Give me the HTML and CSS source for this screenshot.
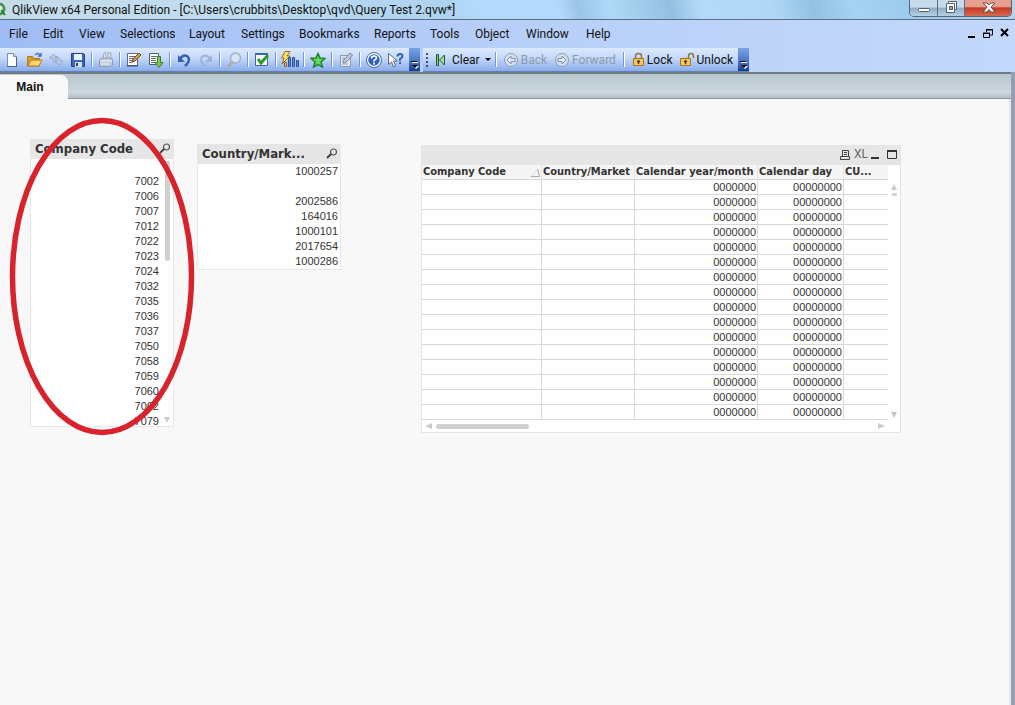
FILE: index.html
```html
<!DOCTYPE html>
<html lang="en">
<head>
<meta charset="utf-8">
<title>QlikView x64 Personal Edition</title>
<link rel="stylesheet" href="styles.css">
</head>
<body>
<header class="titlebar">
  <svg class="app-logo" width="12" height="18" viewBox="0 0 12 18"><circle cx="-1" cy="9" r="5" fill="#fff" stroke="#3c9a4a" stroke-width="3"/><path d="M1 10l4 5" stroke="#237a35" stroke-width="2"/></svg>
  <h1 class="window-title">QlikView x64 Personal Edition - [C:\Users\crubbits\Desktop\qvd\Query Test 2.qvw*]</h1>
  <div class="window-controls">
    <button class="wc" aria-label="Minimize"><svg width="27" height="16"><rect x="8.500" y="8.500" width="11" height="3" rx="1" fill="#fff" stroke="#53606e"/></svg></button>
    <button class="wc" aria-label="Restore"><svg width="26" height="16"><path d="M10.500 1.500h8v8h-2v3h-8v-9h2z" fill="#fff" stroke="#53606e"/><rect x="11.500" y="6.500" width="3" height="3" fill="#8fb0cf" stroke="#53606e"/><path d="M10.500 3.500h6v6" fill="none" stroke="#53606e"/></svg></button>
    <button class="wc wc-close" aria-label="Close"><svg width="46" height="16"><path d="M18 3h4l2 2 2-2h4l-4 4 4 5h-4l-2-2.500L22 12h-4l4-5z" fill="#fff" stroke="#63484a"/></svg></button>
  </div>
</header>

<nav class="menubar">
  <div class="menus">
    <button>File</button><button>Edit</button><button>View</button><button>Selections</button><button>Layout</button><button>Settings</button><button>Bookmarks</button><button>Reports</button><button>Tools</button><button>Object</button><button>Window</button><button>Help</button>
  </div>
  <div class="doc-controls">
    <button aria-label="Minimize document"><svg width="9" height="12"><path d="M1 9h7" stroke="#000" stroke-width="2"/></svg></button>
    <button aria-label="Restore document"><svg width="10" height="12"><path d="M3.500 4V2h6v5H7M3 1.500h7M.500 5.500h6v4h-6zM0 5h7" fill="none" stroke="#000"/></svg></button>
    <button aria-label="Close document"><svg width="9" height="12"><path d="M1 1l7 7M8 1L1 8" stroke="#000" stroke-width="2"/></svg></button>
  </div>
</nav>

<div class="toolbars">
  <div class="toolbar">
    <button class="tool" aria-label="New"><svg width="16" height="16"><path d="M3.500 1.500h6l3 3v10h-9z" fill="#fdfeff" stroke="#7890ad"/><path d="M9.500 1.500v3h3" fill="#c9d9ea" stroke="#7890ad"/><path d="M3 14.500h10M12.500 5v10" stroke="#4b6485"/></svg></button>
    <button class="tool" aria-label="Open"><svg width="17" height="16"><path d="M1.500 14V4.500h5l1 2h6V14z" fill="#d99a30" stroke="#b8781c"/><path d="M2 14l3-6h11l-3 6z" fill="#ffd56e" stroke="#b8781c"/><path d="M9 3q3-3 5 0M12 4h3V1" fill="none" stroke="#4c75ad" stroke-width="1.500"/></svg></button>
    <button class="tool" aria-label="Reload"><svg width="16" height="16"><path d="M6 2L1 6h3q0 4 4 5V9Q6 8 7 6h2L6 3zM11 13l4-4h-3q0-4-4-5v2q2 1 1 3H7l4 4z" fill="#bccbdf" stroke="#8fa2bd" stroke-width=".8"/></svg></button>
    <button class="tool" aria-label="Save"><svg width="16" height="16"><path d="M1.500 1.500h12l1 1v12h-13z" fill="#3e65bd" stroke="#283f87"/><path d="M4 2h8v6H4z" fill="#eaf3ff"/><path d="M5 10h7v5H5z" fill="#d6dfea"/><path d="M6 11h2v3H6z" fill="#263d78"/></svg></button>
    <span class="sep"></span>
    <button class="tool" aria-label="Print"><svg width="16" height="16"><path d="M5 7l1-6h7l-1 6" fill="#e7edf6" stroke="#97a5b9"/><path d="M7 3h4M7 5h4" stroke="#97a5b9"/><path d="M1.500 8l2-2h10l1 2v5l-2 1.500h-11z" fill="#bec9d9" stroke="#8f9db2"/><path d="M2 9h12M3 12h8" stroke="#f0f5fa"/></svg></button>
    <span class="sep"></span>
    <button class="tool" aria-label="Edit script"><svg width="16" height="16"><path d="M1.500 1.500h10v12h-10z" fill="#fffef8" stroke="#5c6d81"/><path d="M1 14h11" stroke="#31445e"/><path d="M3 4.500h7M3 6.500h6M3 8.500h4M3 10.500h3" stroke="#5c6d81"/><path d="M6 10l1-3 6-6 2 2-6 6z" fill="#d29c51" stroke="#6d4924"/></svg></button>
    <button class="tool" aria-label="Partial reload"><svg width="16" height="16"><path d="M1.500 1.500h9v11h-9z" fill="#fffef8" stroke="#4b5e77"/><path d="M3 4.500h6M3 6.500h5M3 8.500h5M3 10.500h5" stroke="#5c6d81"/><path d="M9.500 4.500h3v6h2.500l-4 5-4-5h2.500z" fill="#7fcb51" stroke="#367b27"/></svg></button>
    <span class="sep"></span>
    <button class="tool" aria-label="Undo"><svg width="16" height="16"><path d="M4 7q3-5 7-3 4 3 0 8l-2 2" fill="none" stroke="#3460b5" stroke-width="2.500"/><path d="M2 3v7h7z" fill="#3460b5"/></svg></button>
    <button class="tool" aria-label="Redo"><svg width="16" height="16"><path d="M12 7Q9 2 5 4q-4 3 0 8l2 2" fill="none" stroke="#a2b3cf" stroke-width="2"/><path d="M14 3v7H7z" fill="#a2b3cf"/></svg></button>
    <span class="sep"></span>
    <button class="tool" aria-label="Search"><svg width="16" height="16"><path d="M6 10l-4 5" stroke="#b4abb1" stroke-width="3"/><circle cx="9.500" cy="6" r="5" fill="#d8e5f5" stroke="#a5b0c4" stroke-width="1.500"/></svg></button>
    <span class="sep"></span>
    <button class="tool" aria-label="Current selections"><svg width="16" height="16"><path d="M1.500 1.500h12v12h-12z" fill="#fff" stroke="#3c66a5"/><path d="M1 2h13" stroke="#3c66a5" stroke-width="2"/><path d="M4 7l3 4 7-8" fill="none" stroke="#2c9e26" stroke-width="3"/></svg></button>
    <span class="sep"></span>
    <button class="tool" aria-label="Quick chart"><svg width="18" height="17"><path d="M7.500 6.500h2v9h-2zM11.500 6.500h2v9h-2zM15.500 9.500h2v6h-2z" fill="#5d8bd8" stroke="#2e519b"/><path d="M4 .500h5L6 5h3l-8 8 2-6H.500z" fill="#ffe06b" stroke="#9c6c1d"/><path d="M3.500 11.500h2v4h-2z" fill="#e8b842" stroke="#8d6727"/></svg></button>
    <span class="sep"></span>
    <button class="tool" aria-label="Add bookmark"><svg width="16" height="16"><path d="M8 1.500l2 4.500 5 .500-4 3.500 1.500 5L8 12.500 3.500 15 5 10 1 6.500 6 6z" fill="#62d957" stroke="#23812c" stroke-width="1.500"/></svg></button>
    <span class="sep"></span>
    <button class="tool" aria-label="Notes"><svg width="16" height="16"><path d="M2.500 3.500h10v11h-10z" fill="#e1e8f3" stroke="#8d9bb1"/><path d="M4 6h4M4 8h3M4 12h6" stroke="#9aa7ba"/><path d="M5 11l1-3 6-7 2.500 2-6 7z" fill="#c3cbd8" stroke="#78869c"/></svg></button>
    <span class="sep"></span>
    <button class="tool" aria-label="Help"><svg width="16" height="16"><circle cx="8" cy="8" r="6.500" fill="#2e61bf" stroke="#fff" stroke-width="1.500"/><circle cx="8" cy="8" r="7.500" fill="none" stroke="#506d9e"/><path d="M5.500 6.500Q5.500 4 8 4t2.500 2Q10.500 7 8 8.500v1M8 10.500v2" fill="none" stroke="#fff" stroke-width="1.700"/></svg></button>
    <button class="tool" aria-label="Context help"><svg width="18" height="16"><path d="M1.500 1.500v11l3-2.500 2 5 2-1-2-5h4z" fill="#fff" stroke="#57677e"/><path d="M10.500 4.500Q10.500 2 13 2t2.500 2Q15.500 5.500 13 7v2M13 10v2" fill="none" stroke="#3460b5" stroke-width="2"/></svg></button>
    <button class="overflow" aria-label="Toolbar options"><svg width="10" height="10"><path d="M3 2.500h6" stroke="#fff"/><path d="M4 6h6L7 9z" fill="#fff"/><path d="M2 1.500h6" stroke="#000"/><path d="M3 5h6L6 8z" fill="#000"/></svg></button>
  </div>
  <div class="toolbar toolbar-nav">
    <span class="grip"></span>
    <button class="command clear"><svg width="12" height="16"><path d="M1.500 2.500h2v11h-2z" fill="#7dd36f" stroke="#245b2b"/><path d="M9.500 3v10L4.500 8z" fill="#9be58a" stroke="#245b2b"/></svg><span>Clear</span><svg width="6" height="4"><path d="M0 0h6L3 3z"/></svg></button>
    <span class="sep"></span>
    <button class="command back" disabled><svg width="16" height="16"><circle cx="8" cy="8" r="6.500" fill="#d3dff0" stroke="#929db0"/><path d="M8 4v2.500h4v3H8V12L4 8z" fill="#e4ecf7" stroke="#8692a6"/></svg><span>Back</span></button>
    <button class="command forward" disabled><svg width="16" height="16"><circle cx="8" cy="8" r="6.500" fill="#d3dff0" stroke="#929db0"/><path d="M8 4v2.500H4v3h4V12l4-4z" fill="#e4ecf7" stroke="#8692a6"/></svg><span>Forward</span></button>
    <span class="sep"></span>
    <button class="command lock"><svg width="13" height="16"><path d="M3.500 8V4q0-2.500 3-2.500t3 2.500v4" fill="none" stroke="#8d7445" stroke-width="1.500"/><path d="M1.500 6.500h10v7h-10z" fill="#f5c562" stroke="#a3731d"/><path d="M6.500 8v4M5 9.500h3" stroke="#59401c" stroke-width="1.500"/></svg><span>Lock</span></button>
    <button class="command lock"><svg width="16" height="16"><path d="M9.500 7V4q0-2.500 2.500-2.500T14.500 4v2" fill="none" stroke="#8d7445" stroke-width="1.500"/><path d="M1.500 6.500h10v7h-10z" fill="#f5c562" stroke="#a3731d"/><path d="M6.500 8v4M5 9.500h3" stroke="#59401c" stroke-width="1.500"/></svg><span>Unlock</span></button>
    <button class="overflow" aria-label="Navigation toolbar options"><svg width="10" height="10"><path d="M3 2.500h6" stroke="#fff"/><path d="M4 6h6L7 9z" fill="#fff"/><path d="M2 1.500h6" stroke="#000"/><path d="M3 5h6L6 8z" fill="#000"/></svg></button>
  </div>
</div>

<div class="document">
  <div class="tabs"><button class="tab">Main</button></div>
  <main class="sheet">
    <section class="object listbox company">
      <header class="caption"><h2>Company Code</h2><button aria-label="Search Company Code"><svg width="12" height="12"><circle cx="7.500" cy="4" r="3" fill="none" stroke="#555" stroke-width="1.200"/><path d="M5 6L1 10" stroke="#444" stroke-width="2"/></svg></button></header>
      <div class="list-body">
        <ul class="values"><li></li><li>7002</li><li>7006</li><li>7007</li><li>7012</li><li>7022</li><li>7023</li><li>7024</li><li>7032</li><li>7035</li><li>7036</li><li>7037</li><li>7050</li><li>7058</li><li>7059</li><li>7060</li><li>7062</li><li>7079</li></ul>
        <div class="vscroll"><span class="vthumb"></span><svg width="8" height="8"><path d="M1 1h6L4 7z" fill="#ccc"/></svg></div>
      </div>
    </section>

    <section class="object listbox country">
      <header class="caption"><h2>Country/Mark...</h2><button aria-label="Search Country/Market"><svg width="12" height="12"><circle cx="7.500" cy="4" r="3" fill="none" stroke="#555" stroke-width="1.200"/><path d="M5 6L1 10" stroke="#444" stroke-width="2"/></svg></button></header>
      <ul class="values"><li>1000257</li><li></li><li>2002586</li><li>164016</li><li>1000101</li><li>2017654</li><li>1000286</li></ul>
    </section>

    <section class="object tablebox">
      <header class="caption table-caption">
        <button aria-label="Print table"><svg width="11" height="11"><path d="M2.500 7V1.500h6V7M4 3.500h3M4 5.500h3M.500 7.500h9v3h-9z" fill="none" stroke="#444"/></svg></button>
        <button class="xl" aria-label="Send to Excel">XL</button>
        <button aria-label="Minimize table"><svg width="9" height="11"><path d="M0 9h8" stroke="#333" stroke-width="2"/></svg></button>
        <button class="maximize" aria-label="Maximize table"><svg width="11" height="11"><path d="M.500 1.500h9v8h-9z" fill="none" stroke="#333"/><path d="M0 2h10" stroke="#333" stroke-width="2"/></svg></button>
      </header>
      <div class="table-body">
        <table>
          <colgroup><col class="c-company"><col class="c-country"><col class="c-month"><col class="c-day"><col></colgroup>
          <thead><tr><th><span class="sorted">Company Code<svg width="9" height="9"><path d="M1 8L7 1" stroke="#ddd"/><path d="M0 8.500h8.500L6.500 1" fill="none" stroke="#aaa"/></svg></span></th><th>Country/Market</th><th>Calendar year/month</th><th>Calendar day</th><th>CU...</th></tr></thead>
          <tbody>
            <tr><td></td><td></td><td>0000000</td><td>00000000</td><td></td></tr>
            <tr><td></td><td></td><td>0000000</td><td>00000000</td><td></td></tr>
            <tr><td></td><td></td><td>0000000</td><td>00000000</td><td></td></tr>
            <tr><td></td><td></td><td>0000000</td><td>00000000</td><td></td></tr>
            <tr><td></td><td></td><td>0000000</td><td>00000000</td><td></td></tr>
            <tr><td></td><td></td><td>0000000</td><td>00000000</td><td></td></tr>
            <tr><td></td><td></td><td>0000000</td><td>00000000</td><td></td></tr>
            <tr><td></td><td></td><td>0000000</td><td>00000000</td><td></td></tr>
            <tr><td></td><td></td><td>0000000</td><td>00000000</td><td></td></tr>
            <tr><td></td><td></td><td>0000000</td><td>00000000</td><td></td></tr>
            <tr><td></td><td></td><td>0000000</td><td>00000000</td><td></td></tr>
            <tr><td></td><td></td><td>0000000</td><td>00000000</td><td></td></tr>
            <tr><td></td><td></td><td>0000000</td><td>00000000</td><td></td></tr>
            <tr><td></td><td></td><td>0000000</td><td>00000000</td><td></td></tr>
            <tr><td></td><td></td><td>0000000</td><td>00000000</td><td></td></tr>
            <tr><td></td><td></td><td>0000000</td><td>00000000</td><td></td></tr>
          </tbody>
        </table>
        <div class="table-vscroll"><svg width="8" height="14"><path d="M1 6h6L4 0z" fill="#ccc"/><rect x="2" y="9" width="5" height="3" rx="1" fill="#d2d2d2"/></svg><svg width="8" height="8"><path d="M1 1h6L4 7z" fill="#c4c4c4"/></svg></div>
      </div>
      <div class="hscroll"><svg width="8" height="8"><path d="M7 1v6L0 4z" fill="#ccc"/></svg><span class="hthumb"></span><svg class="right-arrow" width="8" height="8"><path d="M0 1v6l7-3z" fill="#ccc"/></svg></div>
    </section>

    <svg class="highlight" width="186" height="320" viewBox="0 0 186 320"><ellipse cx="93" cy="160.500" rx="89.500" ry="156" fill="none" stroke="#d9232c" stroke-width="5.500"/></svg>
  </main>
</div>
</body>
</html>
```
FILE: styles.css
```css
* { box-sizing: border-box; }
body {
  margin: 0;
  min-height: 100vh;
  display: flex;
  flex-direction: column;
  font: 12px/16px Roboto, "Open Sans", sans-serif;
  color: #111;
  background: #f8f8f8;
}
button {
  padding: 0;
  border: 0;
  background: none;
  color: inherit;
  font: inherit;
}
h1, h2, ul { margin: 0; padding: 0; font: inherit; list-style: none; }
svg { display: block; flex: none; }

.titlebar {
  display: flex;
  height: 20px;
  border-bottom: 1px solid #5c6d80;
  background: linear-gradient(75deg, #c5dbe8 0%, #bfdcee 20%, #aed3f0 44%, #b3dafa 47%, #b3dafa 55%, #9cc5e5 57%, #b0d8f8 60%, #94c0df 66%, #b3dafa 69%, #b0d8f6 76%, #91c2e2 80%, #a6d3f2 84%, #9acaed 90%, #b8d4ea 100%);
}
.window-title {
  flex: 1;
  padding-top: 2px;
  white-space: nowrap;
}
.window-controls {
  display: flex;
  height: 17px;
  margin-right: 3px;
  border: 1px solid #56677b;
  border-top: 0;
  border-radius: 0 0 5px 5px;
  overflow: hidden;
}
.wc {
  background: linear-gradient(#c8dbec 0 45%, #8daac6 50%, #b5d1e9);
  border-right: 1px solid #5e7084;
}
.wc-close {
  border: 0;
  background: linear-gradient(#e5a090 0 40%, #c33a22 50%, #d76a50);
}

.menubar {
  display: flex;
  justify-content: space-between;
  height: 28px;
  padding: 0 6px 0 9px;
  background: linear-gradient(90deg, #9fbdf5, #b7cff8 50%, #c3d8fa);
}
.menus {
  display: grid;
  grid-template-columns: 34px 36px 41px 69px 52px 58px 75px 56px 45px 51px 60px auto;
}
.menus button { text-align: left; white-space: nowrap; }
.doc-controls { display: flex; gap: 7px; align-items: center; }

.toolbars {
  display: flex;
  gap: 3px;
  height: 24px;
  background: linear-gradient(90deg, #9fbdf5, #b7cff8 50%, #c3d8fa);
}
.toolbar {
  display: flex;
  align-items: center;
  padding-left: 1px;
  border-bottom: 1px solid #6083b5;
  background: linear-gradient(#dceafd, #c3d8fa 45%, #89aceb);
}
.tool { width: 22px; display: flex; justify-content: center; }
.sep {
  width: 2px;
  height: 15px;
  margin: 0 2px;
  background: linear-gradient(90deg, #7696cc 0 1px, #fff 1px);
}
.overflow {
  align-self: stretch;
  width: 11px;
  margin-left: 2px;
  display: flex;
  align-items: flex-end;
  padding-bottom: 1px;
  background: linear-gradient(#7ba2e8, #4a73c4 60%, #123d92);
}
.grip {
  width: 2px;
  height: 14px;
  margin: 0 7px 0 2px;
  background: repeating-linear-gradient(#35517e 0 2px, transparent 2px 4px);
}
.command { display: flex; align-items: center; gap: 2px; }
.command:disabled { color: #8f99a8; }
.clear { gap: 5px; margin-right: 2px; }
.back { margin-left: 4px; }
.forward { margin: 0 5px 0 7px; }
.lock { margin: 0 1px 0 5px; }
.toolbar-nav .overflow { margin-left: 4px; }

.document {
  flex: 1;
  display: flex;
  flex-direction: column;
  border-right: 4px solid #939db3;
}
.tabs {
  display: flex;
  align-items: flex-end;
  height: 27px;
  border-top: 2px solid #707b87;
  border-bottom: 1px solid #92999e;
  background: linear-gradient(#b8c6cd, #ccd7de 75%, #b8c0c5);
}
.tab {
  width: 68px;
  height: 24px;
  margin-bottom: -1px;
  padding-right: 8px;
  border-radius: 0 7px 0 0;
  background: #f8f8f8;
  font: bold 12px/24px "Liberation Sans", sans-serif;
}
.sheet {
  position: relative;
  flex: 1;
  display: flex;
  align-items: flex-start;
  padding: 40px 30px;
  border-right: 2px solid #e6e9e8;
  font: 11px/15px "Liberation Sans", sans-serif;
  color: #333;
}
.object { flex: none; border: 1px solid #e6e6e6; background: #fff; }
.listbox { width: 144px; }
.company { margin-right: 23px; }
.country { margin: 5px 80px 0 0; }
.caption {
  display: flex;
  justify-content: space-between;
  align-items: center;
  height: 19px;
  padding: 0 2px 2px 4px;
  background: #e6e6e6;
}
.caption h2 {
  white-space: nowrap;
  font: bold 13px/17px "DejaVu Sans Condensed", "Open Sans", sans-serif;
}
.values { flex: 1; padding-right: 2px; text-align: right; }
.values li { height: 15px; }
.list-body { display: flex; height: 267px; overflow: hidden; }
.vscroll {
  width: 12px;
  display: flex;
  flex-direction: column;
  justify-content: space-between;
  align-items: center;
  padding: 2px 0;
}
.vthumb { width: 5px; height: 100px; border-radius: 0 0 3px 3px; background: #d0d0d0; }

.tablebox { width: 480px; margin-top: 6px; }
.table-caption { justify-content: flex-end; gap: 3px; }
.xl { font: 12px/17px Roboto, sans-serif; color: #666; }
.maximize { margin-left: 4px; }
.table-body { display: flex; }
table {
  flex: 1;
  table-layout: fixed;
  width: 466px;
  border-collapse: separate;
  border-spacing: 0;
}
.c-company { width: 120px; }
.c-country { width: 93px; }
.c-month { width: 123px; }
.c-day { width: 86px; }
th, td {
  height: 15px;
  padding: 0 1px;
  overflow: hidden;
  white-space: nowrap;
  line-height: 14px;
  border: solid #d8d8d8;
  border-width: 0 1px 1px 0;
  text-align: right;
}
th:last-child, td:last-child { border-right: 0; }
th {
  background: #f5f5f5;
  border-right-color: #e4e4e4;
  text-align: left;
  font: bold 11px/14px "DejaVu Sans Condensed", "Open Sans", sans-serif;
}
.sorted { display: flex; justify-content: space-between; align-items: center; }
.table-vscroll {
  width: 12px;
  display: flex;
  flex-direction: column;
  justify-content: space-between;
  align-items: center;
  padding: 19px 0 1px;
}
.hscroll { display: flex; align-items: center; gap: 3px; height: 12px; padding: 0 14px 0 3px; }
.hthumb { width: 93px; height: 5px; border-radius: 3px; background: #d0d0d0; }
.right-arrow { margin-left: auto; }

.highlight { position: absolute; left: 9px; top: 17px; pointer-events: none; }
```
